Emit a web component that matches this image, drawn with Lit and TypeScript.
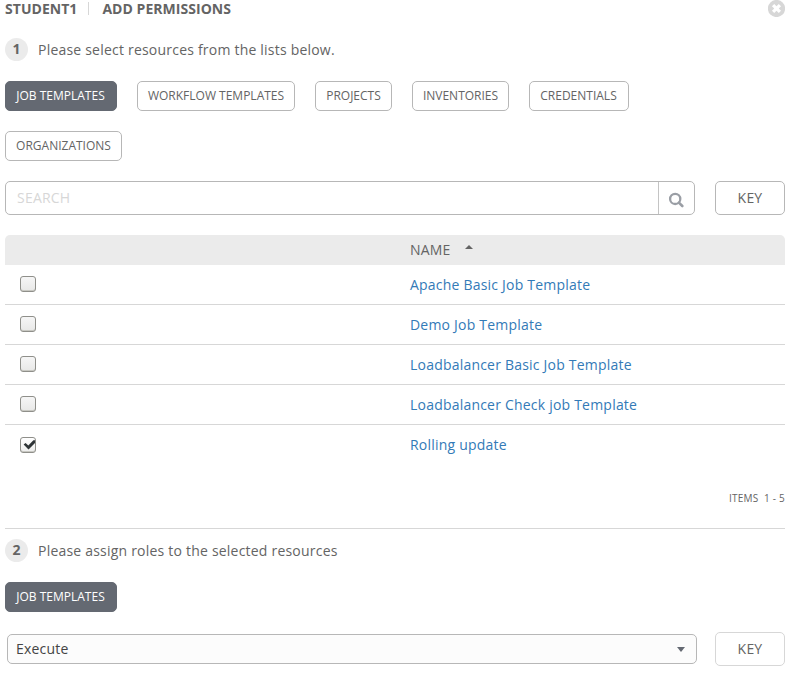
import { LitElement, html, svg, css, nothing } from "lit";
import { customElement, state } from "lit/decorators.js";
import { classMap } from "lit/directives/class-map.js";

interface Resource {
  name: string;
  checked: boolean;
}

const TABS = [
  { label: "JOB TEMPLATES", size: "w112" },
  { label: "WORKFLOW TEMPLATES", size: "w158" },
  { label: "PROJECTS", size: "w77" },
  { label: "INVENTORIES", size: "w97" },
  { label: "CREDENTIALS", size: "w100" },
  { label: "ORGANIZATIONS", size: "w117" },
];

@customElement("app-root")
export class AppRoot extends LitElement {
  @state() private activeTab = 0;
  @state() private resources: Resource[] = [
    { name: "Apache Basic Job Template", checked: false },
    { name: "Demo Job Template", checked: false },
    { name: "Loadbalancer Basic Job Template", checked: false },
    { name: "Loadbalancer Check job Template", checked: false },
    { name: "Rolling update", checked: true },
  ];

  static styles = css`
    :host {
      display: block;
      box-sizing: border-box;
      width: 795px;
      height: 678px;
      padding: 0 10px 0 5px;
      overflow: hidden;
      background: #fff;
      color: #646464;
      font: 14px/20px "Open Sans", sans-serif;
      letter-spacing: 0.21px;
    }
    * { box-sizing: border-box; }
    header {
      display: flex;
      justify-content: space-between;
      height: 38px;
    }
    .title {
      display: flex;
      height: 18px;
      line-height: 18px;
      font-weight: 700;
      letter-spacing: 0.04px;
      white-space: nowrap;
    }
    .separator {
      width: 1px;
      height: 13px;
      margin: 2px 13px 0 11px;
      background: #d7d7d7;
    }
    .close { display: block; width: 17px; height: 17px; }
    .step { display: flex; align-items: center; height: 23px; }
    .number {
      width: 23px;
      height: 23px;
      margin-right: 10px;
      border-radius: 50%;
      background: #ebebeb;
      font-weight: 700;
      line-height: 22px;
      text-align: center;
    }
    .step p { margin: 1px 0 0; white-space: nowrap; }
    .tabs { display: flex; flex-wrap: wrap; gap: 20px; margin-top: 20px; padding-right: 20px; }
    .tab {
      height: 30px;
      padding: 0;
      border: 1px solid #b7b7b7;
      border-radius: 5px;
      background: #fff;
      color: #646464;
      font: 12px/28px "Open Sans", sans-serif;
      text-align: center;
      white-space: nowrap;
    }
    .active { border-color: #646972; background: #646972; color: #fff; }
    .w112 { width: 112px; padding-right: 1px; }
    .w158 { width: 158px; }
    .w77 { width: 77px; }
    .w97 { width: 97px; }
    .w100 { width: 100px; padding-right: 1px; }
    .w117 { width: 117px; }
    .bar { display: flex; justify-content: space-between; margin-top: 20px; }
    .search {
      display: flex;
      width: 690px;
      height: 34px;
      border: 1px solid #b7b7b7;
      border-radius: 5px;
    }
    .search .field { flex: 1; padding-left: 11px; color: #d7d7d7; line-height: 32px; }
    .search .go {
      width: 36px;
      padding: 10px 0 0 9px;
      border-left: 1px solid #c4c4c4;
    }
    .go svg { display: block; }
    .key {
      width: 70px;
      height: 34px;
      padding: 0;
      border: 1px solid #b7b7b7;
      border-radius: 5px;
      background: #fff;
      color: #646464;
      font: 14px/32px "Open Sans", sans-serif;
      letter-spacing: 0.21px;
    }
    .key.light { border-color: #d7d7d7; }
    .head {
      display: flex;
      align-items: center;
      height: 30px;
      margin-top: 20px;
      padding-left: 405px;
      border-radius: 5px 5px 0 0;
      background: #ebebeb;
    }
    .sort { margin: -6px 0 0 14px; }
    .row {
      display: grid;
      grid-template-columns: 15px 390px 1fr;
      height: 40px;
      border-bottom: 1px solid #d7d7d7;
    }
    .row:last-child { border-bottom: 0; }
    .row a { grid-column: 3; color: #337ab7; line-height: 40px; white-space: nowrap; }
    .box {
      grid-column: 2;
      width: 16px;
      height: 16px;
      margin-top: 11px;
      border: 1px solid #8f8f8a;
      border-radius: 3px;
      background: linear-gradient(#f6f6f6, #e8e8e7);
      box-shadow: inset 0 -1px #c8c8c2;
    }
    .box.checked { margin-top: 12px; background: linear-gradient(#fff, #ededec); }
    .box svg { display: block; }
    .count {
      height: 64px;
      border-bottom: 1px solid #d7d7d7;
      padding-top: 23px;
      text-align: right;
      font-size: 10px;
      white-space: pre;
    }
    .second { margin-top: 10px; }
    .roles { display: flex; align-items: center; justify-content: space-between; margin: 20px 0 0 2px; }
    .select {
      display: flex;
      align-items: center;
      justify-content: space-between;
      width: 690px;
      height: 30px;
      padding: 0 11px 0 8px;
      border: 1px solid #b7b7b7;
      border-radius: 5px;
      background: #fcfcfc;
      color: #444;
    }
  `;

  private toggle(index: number) {
    this.resources = this.resources.map((r, i) =>
      i === index ? { ...r, checked: !r.checked } : r
    );
  }

  private renderTab(tab: { label: string; size: string }, index: number) {
    const classes = { tab: true, [tab.size]: true, active: this.activeTab === index };
    return html`<button class=${classMap(classes)} @click=${() => (this.activeTab = index)}>${tab.label}</button>`;
  }

  private renderRow(item: Resource, index: number) {
    const check = html`<svg width="14" height="14" viewBox="0 0 14 14">
      ${svg`<path d="M2.6 6.6 4.6 4.9 7.3 7.4 12.4 2.2 14 2.2 14 4.9 7.5 11.4Z" fill="#2e3436"/>`}
    </svg>`;
    return html`<div class="row">
      <span class=${classMap({ box: true, checked: item.checked })} role="checkbox"
        aria-checked=${item.checked} @click=${() => this.toggle(index)}>${item.checked ? check : nothing}</span>
      <a>${item.name}</a>
    </div>`;
  }

  render() {
    return html`
      <header>
        <div class="title"><span>STUDENT1</span><i class="separator"></i><span>ADD PERMISSIONS</span></div>
        <svg class="close" viewBox="0 0 17 17">
          <circle cx="8.5" cy="8.5" r="8.6" fill="#d7d7d7" />
          <path d="M5.1 5.1 11.9 11.9M11.9 5.1 5.1 11.9" stroke="#fff" stroke-width="3.2" />
        </svg>
      </header>
      <section>
        <div class="step"><span class="number">1</span><p>Please select resources from the lists below.</p></div>
        <div class="tabs">${TABS.map((t, i) => this.renderTab(t, i))}</div>
        <div class="bar">
          <div class="search">
            <span class="field">SEARCH</span>
            <span class="go"><svg width="16" height="16" viewBox="0 0 16 16" fill="none" stroke="#9a9ea5">
              <circle cx="7.2" cy="6.9" r="5.1" stroke-width="2.3" />
              <path d="M10.9 10.6 14.3 14" stroke-width="2.6" stroke-linecap="round" />
            </svg></span>
          </div>
          <button class="key">KEY</button>
        </div>
        <div class="head">NAME<svg class="sort" width="8" height="4" viewBox="0 0 8 4">
          <path d="M0 4 4 0 8 4Z" fill="#646464" /></svg></div>
        <div>${this.resources.map((r, i) => this.renderRow(r, i))}</div>
        <div class="count">ITEMS  1 - 5</div>
      </section>
      <section>
        <div class="step second"><span class="number">2</span><p>Please assign roles to the selected resources</p></div>
        <div class="tabs"><button class="tab active w112">JOB TEMPLATES</button></div>
        <div class="roles">
          <div class="select">Execute<svg width="8" height="5" viewBox="0 0 8 5">
            <path d="M0 0H8L4 5Z" fill="#646972" /></svg></div>
          <button class="key light">KEY</button>
        </div>
      </section>
    `;
  }
}
